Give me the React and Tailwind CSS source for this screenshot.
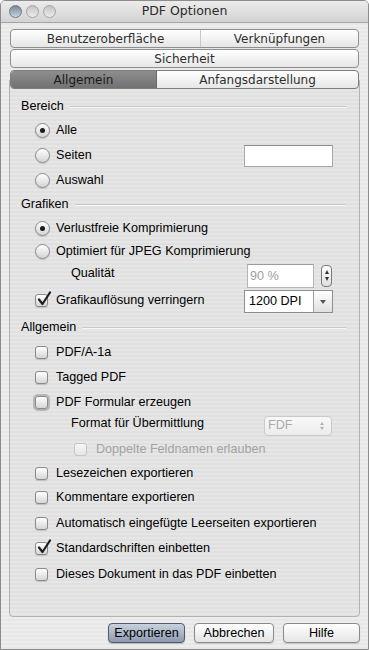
import React from 'react';

const stripes =
  'bg-[repeating-linear-gradient(180deg,#ededed_0px,#ededed_2px,#e7e7e7_2px,#e7e7e7_4px)]';
const panelStripes =
  'bg-[repeating-linear-gradient(180deg,#e6e6e6_0px,#e6e6e6_2px,#e0e0e0_2px,#e0e0e0_4px)]';

function Radio({ checked }) {
  return (
    <span className="w-[15px] h-[15px] rounded-full border border-[#8a8a8a] bg-linear-to-b from-white to-[#d4d4d4] shadow-[0_1px_1px_rgba(0,0,0,0.15)] flex items-center justify-center shrink-0">
      {checked && <span className="w-[5px] h-[5px] rounded-full bg-[#1c1c1c]" />}
    </span>
  );
}

function Check({ checked, disabled, focus }) {
  return (
    <span
      className={`relative w-[13px] h-[13px] rounded-[3px] border shrink-0 bg-linear-to-b ${
        disabled
          ? 'border-[#c4c4c4] from-[#f6f6f6] to-[#e6e6e6]'
          : 'border-[#8a8a8a] from-white to-[#d6d6d6] shadow-[0_1px_1px_rgba(0,0,0,0.15)]'
      } ${focus ? 'ring-2 ring-[#9a9a9a]/60' : ''}`}
    >
      {checked && (
        <svg viewBox="0 0 16 16" className="absolute -top-[4px] left-[0px] w-[16px] h-[16px]">
          <path d="M3 8.5 L6.5 13 L14 1.5" fill="none" stroke="#1e1e1e" strokeWidth="2.2" strokeLinecap="round" strokeLinejoin="round" />
        </svg>
      )}
    </span>
  );
}

function Section({ title, h }) {
  return (
    <div className={`flex items-center pl-[11px] pr-[13px] ${h}`}>
      <span className="text-black">{title}</span>
      <span className="flex-1 h-px bg-[#c9c9c9] ml-[6px] shadow-[0_1px_0_#f6f6f6]" />
    </div>
  );
}

function Option({ kind, checked, label, h, right, focus }) {
  return (
    <div className={`flex items-center pl-[25px] ${h}`}>
      {kind === 'radio' ? <Radio checked={checked} /> : <Check checked={checked} focus={focus} />}
      <span className={`text-black ${kind === 'radio' ? 'ml-[6px]' : 'ml-[8px]'}`}>{label}</span>
      {right}
    </div>
  );
}

function Tab({ label, selected, className = '' }) {
  return (
    <div
      className={`flex items-center justify-center ${
        selected ? 'bg-linear-to-b from-[#8e8e8e] to-[#727272] text-[#1a1a1a]' : 'text-[#2e2e2e]'
      } ${className}`}
    >
      {label}
    </div>
  );
}

export default function App() {
  return (
    <div
      className={`w-[369px] h-[650px] flex flex-col border border-[#8c8c8c] rounded-t-[5px] overflow-hidden ${stripes}`}
      style={{ fontFamily: '"Liberation Sans", Arial, sans-serif' }}
    >
      {/* Title bar */}
      <div className="relative h-[22px] shrink-0 bg-linear-to-b from-[#ececec] to-[#d3d3d3] border-b border-[#a5a5a5] flex items-center justify-center">
        <div className="absolute left-[8px] top-[4px] flex gap-[4px]">
          <span className="w-[13px] h-[13px] rounded-full border border-[#6c7a88] bg-linear-to-b from-[#76889a] to-[#c9d5df]" />
          <span className="w-[13px] h-[13px] rounded-full border border-[#a4a4a4] bg-linear-to-b from-[#c4c4c4] to-[#ececec]" />
          <span className="w-[13px] h-[13px] rounded-full border border-[#a4a4a4] bg-linear-to-b from-[#c4c4c4] to-[#ececec]" />
        </div>
        <span className="text-[12.5px] text-[#2a2a2a]" style={{ fontFamily: '"DejaVu Sans", Verdana, sans-serif' }}>
          PDF Optionen
        </span>
      </div>

      {/* Tabs */}
      <div
        className="relative z-10 mx-[9px] mt-[6px] flex flex-col gap-px text-[12px]"
        style={{ fontFamily: '"DejaVu Sans", Verdana, sans-serif' }}
      >
        <div className="h-[19px] flex rounded-[4px] border border-[#8f8f8f] bg-linear-to-b from-white to-[#e6e6e6] overflow-hidden">
          <Tab label="Benutzeroberfläche" className="w-[190px] border-r border-[#c8c8c8]" />
          <Tab label="Verknüpfungen" className="flex-1" />
        </div>
        <div className="h-[19px] flex rounded-[4px] border border-[#8f8f8f] bg-linear-to-b from-white to-[#e6e6e6] overflow-hidden">
          <Tab label="Sicherheit" className="flex-1" />
        </div>
        <div className="mt-[1px] h-[19px] flex rounded-[4px] border border-[#7d7d7d] bg-linear-to-b from-white to-[#e6e6e6] overflow-hidden">
          <Tab label="Allgemein" selected className="w-[146px] border-r border-[#6a6a6a]" />
          <Tab label="Anfangsdarstellung" className="flex-1" />
        </div>
      </div>

      {/* Panel */}
      <div
        className={`mx-[8px] -mt-[9px] pt-[13px] h-[537px] border border-[#b2b2b2] rounded-b-[4px] text-[12.6px] ${panelStripes}`}
      >
        <Section title="Bereich" h="h-[24px]" />
        <Option kind="radio" checked label="Alle" h="h-[25px]" />
        <Option
          kind="radio"
          label="Seiten"
          h="h-[25px]"
          right={<span className="ml-auto mr-[26px] w-[89px] h-[22px] bg-white border border-[#a9a9a9] border-t-[#8c8c8c]" />}
        />
        <Option kind="radio" label="Auswahl" h="h-[24px]" />
        <Section title="Grafiken" h="h-[24px]" />
        <Option kind="radio" checked label="Verlustfreie Komprimierung" h="h-[24px]" />
        <Option kind="radio" label="Optimiert für JPEG Komprimierung" h="h-[22px]" />
        <div className="flex items-center h-[25px] pl-[61px]">
          <span className="text-black -mt-[2px]">Qualität</span>
          <span className="ml-auto w-[67px] h-[24px] bg-white border border-[#b5b5b5] border-t-[#9a9a9a] flex items-center pl-[2px] text-[#a0a0a0] mt-[3px]">
            90 %
          </span>
          <span className="ml-[7px] mr-[27px] w-[11px] h-[22px] rounded-[4px] border border-[#7a7a7a] bg-linear-to-b from-white to-[#dedede] flex flex-col items-center justify-center gap-[3px] mt-[2px]">
            <span className="w-0 h-0 border-l-[2.5px] border-r-[2.5px] border-b-[4px] border-l-transparent border-r-transparent border-b-[#333]" />
            <span className="w-0 h-0 border-l-[2.5px] border-r-[2.5px] border-t-[4px] border-l-transparent border-r-transparent border-t-[#333]" />
          </span>
        </div>
        <Option
          kind="check"
          checked
          label="Grafikauflösung verringern"
          h="h-[27px]"
          right={
            <span className="ml-auto mr-[26px] w-[89px] h-[23px] flex border border-[#8e8e8e] mt-[2px]">
              <span className="flex-1 bg-white flex items-center pl-[4px] text-black">1200 DPI</span>
              <span className="w-[19px] border-l border-[#a0a0a0] bg-linear-to-b from-white to-[#e0e0e0] flex items-center justify-center">
                <span className="w-0 h-0 border-l-[3px] border-r-[3px] border-t-[4px] border-l-transparent border-r-transparent border-t-[#555]" />
              </span>
            </span>
          }
        />
        <Section title="Allgemein" h="h-[27px]" />
        <Option kind="check" label="PDF/A-1a" h="h-[23px]" />
        <Option kind="check" label="Tagged PDF" h="h-[26px]" />
        <Option kind="check" focus label="PDF Formular erzeugen" h="h-[24px]" />
        <div className="flex items-center h-[23px] pl-[61px]">
          <span className="text-black -mt-[4px]">Format für Übermittlung</span>
          <span className="ml-auto mr-[27px] w-[68px] h-[20px] rounded-[4px] border border-[#c9c9c9] bg-linear-to-b from-[#f8f8f8] to-[#ececec] flex items-center pl-[3px] text-[#ababab]">
            FDF
            <span className="ml-auto mr-[7px] flex flex-col items-center gap-[2px]">
              <span className="w-0 h-0 border-l-[2.5px] border-r-[2.5px] border-b-[3px] border-l-transparent border-r-transparent border-b-[#b0b0b0]" />
              <span className="w-0 h-0 border-l-[2.5px] border-r-[2.5px] border-t-[3px] border-l-transparent border-r-transparent border-t-[#b0b0b0]" />
            </span>
          </span>
        </div>
        <div className="flex items-center h-[24px] pl-[64px]">
          <Check disabled />
          <span className="ml-[9px] text-[#a3a3a3]">Doppelte Feldnamen erlauben</span>
        </div>
        <Option kind="check" label="Lesezeichen exportieren" h="h-[24px]" />
        <Option kind="check" label="Kommentare exportieren" h="h-[25px]" />
        <Option kind="check" label="Automatisch eingefügte Leerseiten exportieren" h="h-[26px]" />
        <Option kind="check" checked label="Standardschriften einbetten" h="h-[25px]" />
        <Option kind="check" label="Dieses Dokument in das PDF einbetten" h="h-[26px]" />
      </div>

      {/* Buttons */}
      <div className="flex justify-end gap-[9px] pr-[8px] mt-[6px] text-[12.6px]">
        <button className="w-[77px] h-[20px] rounded-[4px] border border-[#4f5a6a] bg-linear-to-b from-[#c9d1dd] to-[#8d9bb0] text-black shadow-[0_1px_1px_rgba(0,0,0,0.2)]">
          Exportieren
        </button>
        <button className="w-[80px] h-[20px] rounded-[4px] border border-[#8a8a8a] bg-linear-to-b from-white to-[#e4e4e4] text-black shadow-[0_1px_1px_rgba(0,0,0,0.15)]">
          Abbrechen
        </button>
        <button className="w-[77px] h-[20px] rounded-[4px] border border-[#8a8a8a] bg-linear-to-b from-white to-[#e4e4e4] text-black shadow-[0_1px_1px_rgba(0,0,0,0.15)]">
          Hilfe
        </button>
      </div>
    </div>
  );
}
